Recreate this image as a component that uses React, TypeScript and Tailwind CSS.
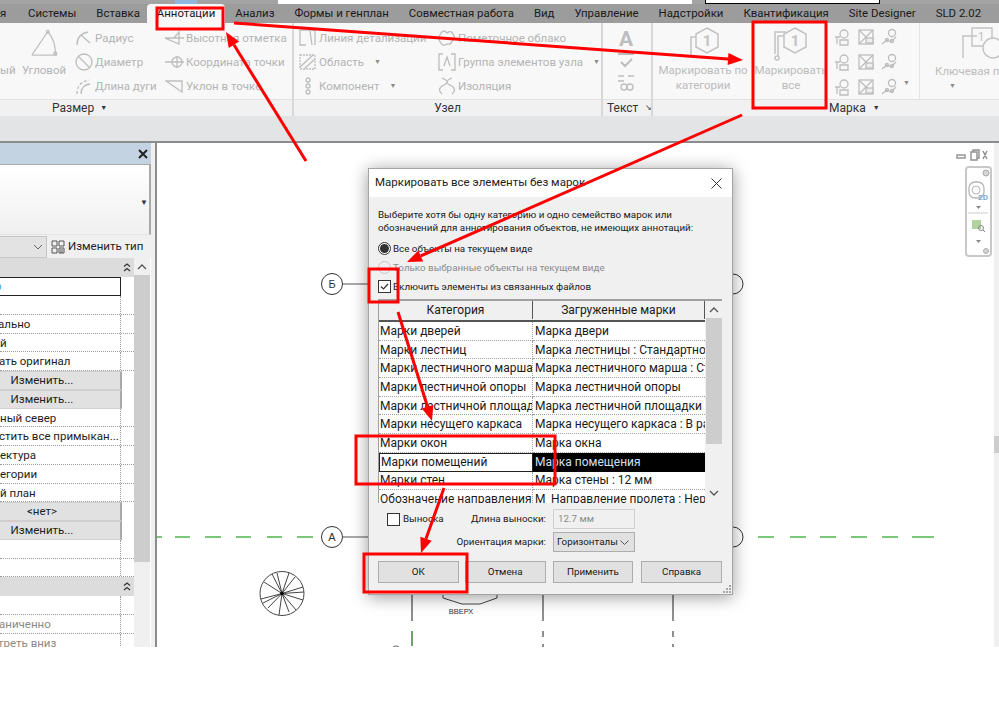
import React from "react";

const FONT = 'Roboto,"Noto Sans",sans-serif';

const I = ({ w = 20, h = 20, children }: { w?: number; h?: number; children: React.ReactNode }) => (
  <svg width={w} height={h} viewBox={`0 0 ${w} ${h}`} fill="none" stroke="#bdbdbd" strokeWidth="1.3" className="shrink-0">
    {children}
  </svg>
);

const TABS = ["Системы", "Вставка", "Аннотации", "Анализ", "Формы и генплан", "Совместная работа", "Вид", "Управление", "Надстройки", "Квантификация", "Site Designer", "SLD 2.02"];

function TopStrip() {
  return (
    <div className="flex h-[4px] shrink-0 bg-[#a3a3a3]">
      <div className="w-[175px]" />
      <div className="w-[22px] bg-[#8fb7e0]" />
      <div className="w-[81px]" />
      <div className="w-[414px] bg-white" />
      <div className="w-[13px]" />
      <div className="w-[175px] border-x border-b border-black bg-white" />
    </div>
  );
}

function Tabs() {
  return (
    <div className="flex h-[19px] shrink-0 items-center bg-[#9c9c9c] text-[11.4px] leading-none text-[#1a1a1a]">
      <span className="w-[18px] shrink-0 overflow-hidden whitespace-nowrap">я</span>
      {TABS.map((t) => (
        <span key={t} className={"flex h-[19px] shrink-0 items-center whitespace-nowrap px-[10px] " + (t === "Аннотации" ? "-ml-[3px] rounded-t-sm bg-[#f7f7f7]" : "")}>{t}</span>
      ))}
    </div>
  );
}

const Tool = ({ icon, label, caret }: { icon: React.ReactNode; label: string; caret?: boolean }) => (
  <div className="flex h-[24px] items-center gap-[1px] whitespace-nowrap">
    {icon}
    <span>{label}</span>
    {caret && <span className="ml-[9px] text-[7px] text-[#8a8a8a]">▼</span>}
  </div>
);

const Panel = ({ w, title, children, className = "" }: { w: number; title: React.ReactNode; children: React.ReactNode; className?: string }) => (
  <div className="flex shrink-0 flex-col border-r-2 border-[#d8d8d8]" style={{ width: w }}>
    <div className={"flex h-[76px] overflow-hidden text-[11.5px] leading-[15px] text-[#b4b4b4] " + className}>{children}</div>
    <div className="flex h-[17px] items-center border-t border-[#e2e2e2] bg-[#f1f1f1] text-[12px] text-[#333]">{title}</div>
  </div>
);

const HexIcon = ({ tall }: { tall?: boolean }) => (
  <svg width="50" height="36" viewBox="0 0 50 36" fill="none" stroke="#c2c2c2" strokeWidth="1.5">
    <path d="M29 1 L40 7 L40 20 L29 26 L18 20 L18 7 Z" />
    <text x="29" y="19" fontSize="15" fontWeight="700" textAnchor="middle" fill="#c2c2c2" stroke="none" fontFamily="Roboto">1</text>
    {tall ? <path d="M18 9 H12 V30 M20 5 H9 V27" /> : <path d="M18 10 H13 V30" />}
    {tall && <circle cx="11" cy="31" r="2" />}
  </svg>
);

const TinyIcon = ({ kind }: { kind: number }) => (
  <I w={18} h={18}>
    {kind % 3 === 0 && <><circle cx="11" cy="6" r="4" /><path d="M2 9h5M4 9v7M7 12h8v5H7z" /></>}
    {kind % 3 === 1 && <><rect x="2" y="2" width="14" height="14" /><path d="M2 2l14 14M16 2L2 16" /><rect x="9" y="10" width="7" height="5" fill="#eee" /></>}
    {kind % 3 === 2 && <><circle cx="12" cy="5" r="3.5" /><path d="M2 16l5-4 4 2 5-5" /><circle cx="7" cy="12" r="1.5" /><circle cx="12" cy="13" r="1.5" /></>}
  </I>
);

const Chevrons = () => (
  <svg width="8" height="9" viewBox="0 0 8 9" fill="none" stroke="#333" strokeWidth="1.2"><path d="M1 3.5l3-2.5 3 2.5M1 8l3-2.5L7 8" /></svg>
);

function Ribbon() {
  return (
    <div className="flex h-[93px] shrink-0 bg-[#f8f8f8]">
      <Panel
        w={294}
        title={<div className="flex w-full items-center gap-[6px] pl-[52px]"><span>Размер</span><span className="text-[7px]">▼</span></div>}
      >
        <div className="w-[18px] shrink-0 pt-[40px]">ый</div>
        <div className="flex w-[52px] shrink-0 flex-col items-center pt-[5px]">
          <svg width="32" height="30" viewBox="0 0 34 32" fill="none" stroke="#c0c0c0" strokeWidth="1.4">
            <path d="M4 29 H31 M4 29 L21 4 M21 4 Q30 14 29 29" />
            <circle cx="21" cy="4" r="1.5" /><circle cx="29" cy="27" r="1.5" />
          </svg>
          <span className="mt-[5px]">Угловой</span>
        </div>
        <div className="ml-[4px] flex w-[91px] shrink-0 flex-col pt-[3px]">
          <Tool label="Радиус" icon={<I><path d="M3 17Q3 6 14 4M7 7l9 8" /></I>} />
          <Tool label="Диаметр" icon={<I><circle cx="10" cy="10" r="8" /><path d="M4 4l12 12" /></I>} />
          <Tool label="Длина дуги" icon={<I><path d="M3 18Q3 6 15 4" strokeDasharray="3 2" /><path d="M7 18Q7 9 16 8" /></I>} />
        </div>
        <div className="flex flex-col pt-[3px]">
          <Tool label="Высотная отметка" icon={<I><path d="M0 10h9l5-6v12zM9 10h10" /></I>} />
          <Tool label="Координата точки" icon={<I><circle cx="12" cy="10" r="5" /><path d="M0 10h19M12 4v12" /></I>} />
          <Tool label="Уклон  в точке" icon={<I><path d="M1 5h16v11z" /></I>} />
        </div>
      </Panel>
      <Panel w={309} title={<div className="w-full text-center">Узел</div>} className="pl-[4px]">
        <div className="flex w-[139px] shrink-0 flex-col pt-[3px]">
          <Tool label="Линия детализации" icon={<I><path d="M2 2h15v15M2 2v15h6M12 3l2 14" /></I>} />
          <Tool label="Область" caret icon={<I><rect x="2" y="3" width="15" height="14" strokeDasharray="2 1" /><path d="M2 15L15 3M6 17L17 7" /></I>} />
          <Tool label="Компонент" caret icon={<I><circle cx="10" cy="4" r="2" /><circle cx="10" cy="10" r="2" /><circle cx="10" cy="16" r="2" /></I>} />
        </div>
        <div className="flex flex-col pt-[3px]">
          <Tool label="Пометочное облако" icon={<I><path d="M4 5q3-4 6 0q4-3 6 1q3 4-1 7q-1 4-5 3q-4 3-6-1q-4-4 0-10z" /></I>} />
          <Tool label="Группа элементов узла" caret icon={<I><path d="M6 2H2v16h4M14 2h4v16h-4M7 14l3-9 3 9" /></I>} />
          <Tool label="Изоляция" icon={<I><path d="M5 2q10 4 0 8q-5 4 0 8M15 2q-10 4 0 8q5 4 0 8" /></I>} />
        </div>
      </Panel>
      <Panel w={50} title={<div className="flex w-full items-center pl-[4px]"><span>Текст</span><span className="ml-[7px] text-[8px]">↘</span></div>}>
        <div className="flex w-full flex-col items-center pr-[2px] pt-[4px]">
          <span className="text-[21px] font-bold leading-[24px] text-[#bdbdbd]">A</span>
          <svg width="18" height="21" viewBox="0 0 18 21" fill="none" stroke="#bdbdbd" strokeWidth="1.6"><path d="M1 3h16M4 11l4 4 7-7" strokeWidth="2" /></svg>
          <svg width="20" height="20" viewBox="0 0 20 20" fill="none" stroke="#bdbdbd" strokeWidth="1.3"><path d="M2 4h6M12 4h6M2 9h6" /><circle cx="8" cy="15" r="3" /><circle cx="14" cy="15" r="3" /></svg>
        </div>
      </Panel>
      <div className="flex min-w-0 flex-1 flex-col">
        <div className="flex h-[76px] overflow-hidden text-[11.5px] leading-[15px] text-[#bcbcbc]">
          <div className="flex w-[100px] shrink-0 flex-col items-center pt-[4px] text-center">
            <HexIcon />
            <span className="whitespace-nowrap">Маркировать по</span>
            <span>категории</span>
          </div>
          <div className="flex w-[76px] shrink-0 flex-col items-center pt-[4px] text-center">
            <HexIcon tall />
            <span className="whitespace-nowrap">Маркировать</span>
            <span>все</span>
          </div>
          <div className="relative grid w-[90px] shrink-0 grid-cols-[repeat(3,23.5px)] content-start gap-y-[7px] pl-[4px] pt-[5px]">
            {[0, 1, 2, 0, 1, 2, 0, 1, 2].map((k, i) => <TinyIcon key={i} kind={k} />)}
            <span className="absolute bottom-[8px] right-[9px] text-[7px] text-[#8a8a8a]">▼</span>
          </div>
          <div className="flex flex-1 flex-col items-center whitespace-nowrap border-l border-[#e4e4e4] pl-[15px] pt-[3px]">
            <svg width="50" height="35" viewBox="0 0 50 35" fill="none" stroke="#c2c2c2" strokeWidth="1.4" className="-mr-[8px] self-end">
              <path d="M6 32V10h14M15 2h20v18H15z" /><circle cx="36" cy="22" r="10" fill="#f8f8f8" />
              <text x="24" y="15" fontSize="12" textAnchor="middle" fill="#c2c2c2" stroke="none">1</text>
            </svg>
            <span className="mt-[3px] self-start">Ключевая п</span>
            <span className="self-start pl-[14px] text-[7px] leading-[14px] text-[#8a8a8a]">▼</span>
          </div>
        </div>
        <div className="flex h-[17px] items-center gap-[7px] border-t border-[#e2e2e2] bg-[#f1f1f1] pl-[176px] text-[12px] text-[#333]">
          <span>Марка</span><span className="text-[7px]">▼</span>
        </div>
      </div>
    </div>
  );
}

const PRow = ({ children, gray, noLine }: { children?: React.ReactNode; gray?: boolean; noLine?: boolean }) => (
  <div className={"flex h-[18.75px] shrink-0 border-b border-dotted border-[#9a9a9a] " + (gray ? "text-[#8a8a8a]" : "text-[#1d1d1d]") + (noLine ? " border-b-0" : "")}>
    <div className="w-[121px] overflow-hidden whitespace-nowrap border-r border-dotted border-[#9a9a9a] leading-[18px]">{children}</div>
    <div className="flex-1" />
  </div>
);

const PBtn = ({ children }: { children: React.ReactNode }) => (
  <div className="mr-[12px] flex h-[18.75px] shrink-0 items-center justify-center border-y border-r-2 border-y-[#cfcfcf] border-r-[#a9a9a9] bg-[#e1e1e1] pr-[36px] text-[#1d1d1d]">{children}</div>
);

function LeftPanel() {
  return (
    <div className="flex w-[151px] shrink-0 flex-col bg-white text-[11.5px]">
      <div className="flex h-[21px] shrink-0 items-center justify-end bg-[#c4d3e2] pr-[3px]">
        <svg width="10" height="10" viewBox="0 0 10 10" stroke="#222" strokeWidth="2"><path d="M1 1l8 8M9 1l-8 8" /></svg>
      </div>
      <div className="relative h-[71px] shrink-0 border-y border-r-2 border-[#a9a9a9] border-b-[#e4e4e4] bg-gradient-to-b from-white to-[#f0f0f0]">
        <span className="absolute right-[1px] top-[34px] text-[8px] leading-none text-[#333]">▼</span>
      </div>
      <div className="flex h-[23px] shrink-0 items-center bg-[#f0f0f0]">
        <div className="flex h-[22px] w-[47px] items-center justify-end border border-l-0 border-[#c6c6c6] bg-[#e3e3e3] pr-[3px]">
          <svg width="10" height="6" viewBox="0 0 10 6" fill="none" stroke="#666"><path d="M1 1l4 4 4-4" /></svg>
        </div>
        <svg width="14" height="14" viewBox="0 0 14 14" fill="none" stroke="#555" className="ml-[4px]"><path d="M1 1h5v5H1zM8 1h5v5H8zM1 8h5v5H1zM8 8h5v5H8zM9 10h3M9 12h3" /></svg>
        <span className="ml-[3px] whitespace-nowrap text-[#222]">Изменить тип</span>
      </div>
      <div className="flex min-h-0 flex-1">
        <div className="flex w-[134px] shrink-0 flex-col overflow-hidden">
          <div className="flex h-[19px] shrink-0 items-center justify-end bg-[#dcdcdc] pr-[3px]"><Chevrons /></div>
          <div className="mr-[13px] flex h-[19px] shrink-0 items-center overflow-hidden border border-l-0 border-[#222] leading-none text-[#3b9be8]"><span className="-ml-[5px]">р</span></div>
          <PRow />
          <PRow><span className="-ml-[2px]">ально</span></PRow>
          <PRow>й</PRow>
          <PRow><span className="-ml-[1px]">ать оригинал</span></PRow>
          <PBtn>Изменить...</PBtn>
          <PBtn>Изменить...</PBtn>
          <PRow>ный север</PRow>
          <PRow><span className="-ml-[1px]">стить все примыкан...</span></PRow>
          <PRow>ектура</PRow>
          <PRow>егории</PRow>
          <PRow>й план</PRow>
          <PBtn>{"<нет>"}</PBtn>
          <PBtn>Изменить...</PBtn>
          <PRow />
          <PRow />
          <div className="flex h-[18.75px] shrink-0 items-center justify-end bg-[#dcdcdc] pr-[3px]"><Chevrons /></div>
          <PRow />
          <PRow gray><span className="-ml-[1px]">аниченно</span></PRow>
          <PRow gray noLine><span className="-ml-[2px]">треть вниз</span></PRow>
        </div>
        <div className="mr-[1px] flex w-[16px] flex-col bg-[#f0f0f0]">
          <div className="flex h-[17px] items-center justify-center">
            <svg width="10" height="6" viewBox="0 0 10 6" fill="none" stroke="#555" strokeWidth="1.3"><path d="M1 5l4-4 4 4" /></svg>
          </div>
          <div className="h-[287px] bg-[#cdcdcd]" />
        </div>
      </div>
    </div>
  );
}

function Drawing() {
  const spokes = [[264, 583], [272, 575], [277, 574], [289, 574], [295, 578], [303, 588], [304, 593], [303, 601], [296, 611], [289, 613], [279, 616], [268, 609], [263, 604], [261, 600]];
  return (
    <svg className="absolute inset-0" width="837" height="504" viewBox="157 144 837 504" fill="none">
      <path d="M157 538H162M175 538H190M205 538H221M236 538H251M267 538H282M297 538H313M758 538H774M790 538H806M820 538H836M851 538H867M882 538H898M912 538H934" stroke="#52b44f" strokeWidth="1.4" />
      <circle cx="332" cy="538" r="10.5" stroke="#333" />
      <circle cx="332" cy="285" r="10.5" stroke="#333" />
      <text x="332" y="542" fontSize="11" fill="#333" textAnchor="middle" fontFamily="Liberation Sans">A</text>
      <text x="332" y="289" fontSize="11" fill="#333" textAnchor="middle" fontFamily="Liberation Sans">Б</text>
      <path d="M343 538H370M343 285H370" stroke="#555" strokeWidth="1.2" />
      <circle cx="733" cy="285" r="10" stroke="#333" />
      <circle cx="733" cy="538" r="10" stroke="#333" />
      <path d="M412 590V622M412 632V647M543 590V622M543 632V638M543 645V648M673 590V622M673 632V638M673 645V648" stroke="#444" strokeWidth="1.2" />
      <path d="M412 632V647" stroke="#52b44f" strokeWidth="1" />
      <path d="M443 590V599L462 605L480 605L497 599V590" stroke="#444" />
      <text x="461" y="615" fontSize="7.5" fill="#333" textAnchor="middle" fontFamily="Liberation Sans">ВВЕРХ</text>
      <circle cx="396" cy="652" r="5" stroke="#666" />
      <circle cx="282" cy="594.5" r="22" stroke="#444" />
      {spokes.map(([x, y], i) => <path key={i} d={`M282 594.5L${x} ${y}`} stroke="#444" strokeWidth="1" />)}
      <circle cx="282" cy="594.5" r="1.8" fill="#000" />
    </svg>
  );
}

function Canvas() {
  return (
    <div className="relative ml-[4px] min-w-0 flex-1 overflow-hidden border-l-2 border-[#8c8c8c] bg-white">
      <Drawing />
      <div className="absolute right-[11px] top-[5px] flex items-center gap-[3px]">
        <svg width="32" height="14" viewBox="0 0 32 14" fill="none" stroke="#8e8e8e" strokeWidth="1.4">
          <rect x="1" y="7" width="8" height="3" /><path d="M15 4h6v8h-6zM17 4V2h6v8h-2M27 3l4 8M31 3l-4 8" />
        </svg>
      </div>
      <div className="absolute right-[7px] top-[23px] flex h-[91px] w-[27px] flex-col items-center rounded-[4px] border-2 border-[#c8c8c8] bg-white">
        <svg width="25" height="87" viewBox="0 0 25 87" fill="none">
          <circle cx="20" cy="5" r="3" fill="#d5d5d5" stroke="#aaa" />
          <rect x="3" y="14" width="15" height="16" rx="6" stroke="#b5b5b5" strokeWidth="1.3" />
          <circle cx="10" cy="22" r="4" stroke="#b5b5b5" />
          <text x="17" y="32" fontSize="8" fontWeight="700" fill="#7ba7d4" textAnchor="middle" fontFamily="Roboto">2D</text>
          <path d="M10 38h5l-2.5 3z" fill="#888" />
          <path d="M2 45H22" stroke="#ddd" strokeWidth="1.5" />
          <rect x="6" y="52" width="9" height="9" fill="#b1d39f" />
          <circle cx="15" cy="60" r="2.5" stroke="#888" />
          <path d="M17 62l2 2" stroke="#888" />
          <path d="M10 72h5l-2.5 3z" fill="#888" />
          <circle cx="20" cy="83" r="2.5" fill="#d5d5d5" stroke="#aaa" />
        </svg>
      </div>
      <div className="absolute bottom-0 right-0 top-0 w-[5px] bg-[#f0f0f0]">
        <div className="mt-[293px] h-[17px] bg-[#cdcdcd]" />
      </div>
    </div>
  );
}

const ROWS: [string, string][] = [
  ["Марки дверей", "Марка двери"],
  ["Марки лестниц", "Марка лестницы : Стандартное"],
  ["Марки лестничного марша", "Марка лестничного марша : Ст"],
  ["Марки лестничной опоры", "Марка лестничной опоры"],
  ["Марки лестничной площад", "Марка лестничной площадки"],
  ["Марки несущего каркаса", "Марка несущего каркаса : В ра"],
  ["Марки окон", "Марка окна"],
  ["Марки помещений", "Марка помещения"],
  ["Марки стен", "Марка стены : 12 мм"],
  ["Обозначение направления", "М_Направление пролета : Нер"],
];

const DBtn = ({ children, ml = "" }: { children: React.ReactNode; ml?: string }) => (
  <div className={"flex h-[22px] w-[81px] items-center justify-center border border-[#adadad] bg-[#e1e1e1] " + ml}>{children}</div>
);

function Dialog() {
  return (
    <div className="absolute left-[368px] top-[168px] flex h-[427px] w-[365px] flex-col border border-[#a5a5a5] bg-[#f0f0f0] text-[9.8px] leading-none text-[#1a1a1a] shadow-[0_2px_16px_rgba(0,0,0,0.4)]">
      <div className="flex h-[28px] shrink-0 items-center justify-between bg-white pl-[6px] pr-[10px] text-[11.5px] text-[#222]">
        <span>Маркировать все элементы без марок</span>
        <svg width="11" height="11" viewBox="0 0 11 11" stroke="#333" strokeWidth="1"><path d="M.5.5l10 10M10.5.5l-10 10" /></svg>
      </div>
      <div className="flex min-h-0 flex-1 flex-col pl-[9px] pr-[10px]">
        <p className="mt-[12px] whitespace-nowrap leading-[12.5px]">Выберите хотя бы одну категорию и одно семейство марок или<br />обозначений для аннотирования объектов, не имеющих аннотаций:</p>
        <div className="mt-[5px] flex h-[19px] items-center gap-[2px]">
          <span className="flex h-[13px] w-[13px] items-center justify-center rounded-full border border-[#333] bg-white"><span className="h-[9px] w-[9px] rounded-full bg-[#333]" /></span>
          <span>Все объекты на текущем виде</span>
        </div>
        <div className="flex h-[19px] items-center gap-[2px] text-[#8c8c8c]">
          <span className="h-[13px] w-[13px] rounded-full border border-[#c8c8c8]" />
          <span>Только выбранные объекты на текущем виде</span>
        </div>
        <div className="flex h-[19px] items-center gap-[2px]">
          <span className="flex h-[13px] w-[13px] items-center justify-center border border-[#333] bg-white">
            <svg width="11" height="11" viewBox="0 0 11 11" fill="none" stroke="#333" strokeWidth="1.2"><path d="M2 5.5l2.5 2.5L9 3" /></svg>
          </span>
          <span>Включить элементы из связанных файлов</span>
        </div>
        <div className="mt-[3px] flex h-[204px] w-[344px] shrink-0 overflow-hidden border-l border-t-2 border-[#a0a0a0]">
          <div className="flex w-[326px] shrink-0 flex-col">
            <div className="flex h-[21px] shrink-0 border-b-2 border-[#555] bg-[#f0f0f0] pb-[1px] text-[12px]">
              <div className="flex w-[154px] items-center justify-center border-r border-[#555]">Категория</div>
              <div className="flex flex-1 items-center justify-center border-r border-[#555]">Загруженные марки</div>
            </div>
            <div className="flex flex-col overflow-hidden bg-white text-[12px]">
              {ROWS.map(([a, b], i) => (
                <div key={a} className="flex h-[18.7px] shrink-0">
                  <div className={"flex w-[154px] shrink-0 items-center overflow-hidden whitespace-nowrap pl-[1px] " + (i === 7 ? "border border-[#222]" : "border-b border-r border-dotted border-[#a0a0a0]")}>{a}</div>
                  <div className={"flex min-w-0 flex-1 items-center overflow-hidden whitespace-nowrap pl-[2px] " + (i === 7 ? "bg-black text-[#cfe0f0]" : "border-b border-dotted border-[#a0a0a0]")}>{b}</div>
                </div>
              ))}
            </div>
          </div>
          <div className="flex flex-1 flex-col items-center bg-[#f0f0f0] pl-[1px]">
            <div className="flex h-[17px] items-center">
              <svg width="10" height="6" viewBox="0 0 10 6" fill="none" stroke="#555" strokeWidth="1.3"><path d="M1 5l4-4 4 4" /></svg>
            </div>
            <div className="h-[126px] w-full bg-[#cdcdcd]" />
            <div className="mt-auto flex h-[17px] items-center pb-[3px]">
              <svg width="10" height="6" viewBox="0 0 10 6" fill="none" stroke="#555" strokeWidth="1.3"><path d="M1 1l4 4 4-4" /></svg>
            </div>
          </div>
        </div>
        <div className="mt-[6px] flex h-[20px] items-center">
          <div className="flex w-[168px] shrink-0 items-center">
            <span className="ml-[9px] h-[13px] w-[13px] border border-[#333] bg-white" />
            <span className="ml-[3px]">Выноска</span>
            <span className="ml-auto whitespace-nowrap">Длина выноски:</span>
          </div>
          <span className="ml-[7px] flex h-[20px] w-[82px] items-center border border-[#d0d0d0] bg-[#f0f0f0] pl-[4px] text-[#8a8a8a]">12.7 мм</span>
        </div>
        <div className="mt-[3px] flex h-[20px] items-center">
          <div className="w-[168px] shrink-0 whitespace-nowrap text-right">Ориентация марки:</div>
          <span className="ml-[7px] flex h-[20px] w-[82px] items-center justify-between border border-[#adadad] bg-[#e1e1e1] pl-[3px] pr-[5px]">
            <span className="w-[62px] overflow-hidden whitespace-nowrap">Горизонталы</span>
            <svg width="9" height="5" viewBox="0 0 9 5" fill="none" stroke="#555"><path d="M.5.5l4 4 4-4" /></svg>
          </span>
        </div>
        <div className="mt-[9px] flex items-center">
          <DBtn>ОК</DBtn>
          <DBtn ml="ml-[6px]">Отмена</DBtn>
          <DBtn ml="ml-[7px]">Применить</DBtn>
          <DBtn ml="ml-[8px]">Справка</DBtn>
        </div>
      </div>
      <svg className="absolute bottom-[1px] right-[1px]" width="9" height="9" viewBox="0 0 9 9" fill="#a8a8a8">
        <rect x="7" y="1" width="2" height="2" /><rect x="4" y="4" width="2" height="2" /><rect x="7" y="4" width="2" height="2" /><rect x="1" y="7" width="2" height="2" /><rect x="4" y="7" width="2" height="2" /><rect x="7" y="7" width="2" height="2" />
      </svg>
    </div>
  );
}

const Arrow = ({ x1, y1, x2, y2, s = 12 }: { x1: number; y1: number; x2: number; y2: number; s?: number }) => {
  const a = Math.atan2(y2 - y1, x2 - x1);
  const bx = x2 - Math.cos(a) * s;
  const by = y2 - Math.sin(a) * s;
  const nx = -Math.sin(a) * s * 0.4;
  const ny = Math.cos(a) * s * 0.4;
  return (
    <g>
      <line x1={x1} y1={y1} x2={bx} y2={by} stroke="#f00" strokeWidth="3" />
      <polygon points={`${x2},${y2} ${bx + nx},${by + ny} ${bx - nx},${by - ny}`} fill="#f00" stroke="none" />
    </g>
  );
};

function Marks() {
  return (
    <svg className="pointer-events-none absolute left-0 top-0" width="999" height="715" viewBox="0 0 999 715" fill="none" stroke="#f00" strokeWidth="3">
      <rect x="157" y="8" width="66" height="21" />
      <rect x="753" y="22" width="73" height="86" />
      <rect x="369" y="269" width="29" height="33" />
      <rect x="356" y="436" width="199" height="48" />
      <rect x="364" y="554" width="103" height="38" />
      <Arrow x1={306} y1={161} x2={226} y2={32} s={15} />
      <Arrow x1={234} y1={23} x2={743} y2={60} s={15} />
      <Arrow x1={742} y1={115} x2={407} y2={262} s={15} />
      <Arrow x1={398} y1={312} x2={432} y2={421} s={15} />
      <Arrow x1={444} y1={488} x2={421} y2={553} s={15} />
    </svg>
  );
}

export default function App() {
  return (
    <div className="relative flex h-[715px] w-[999px] flex-col overflow-hidden bg-white" style={{ fontFamily: FONT }}>
      <TopStrip />
      <Tabs />
      <Ribbon />
      <div className="h-[27px] shrink-0 border-b-2 border-[#8c8c8c] bg-[#e3e4e5]" />
      <div className="flex h-[504px] shrink-0 bg-[#f0f0f0]">
        <LeftPanel />
        <Canvas />
      </div>
      <Dialog />
      <Marks />
    </div>
  );
}
